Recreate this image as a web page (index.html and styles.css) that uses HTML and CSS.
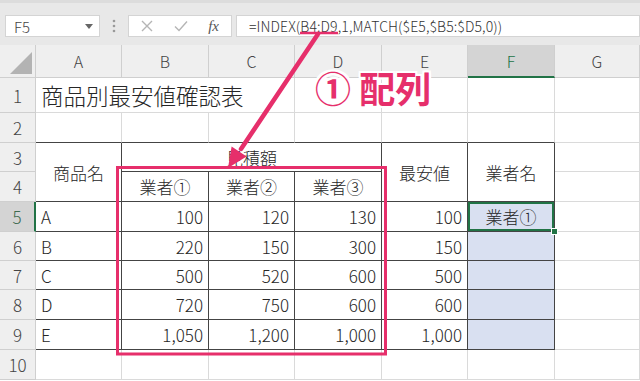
FILE: index.html
```html
<!DOCTYPE html>
<html lang="ja">
<head>
    <meta charset="UTF-8">
    <title>商品別最安値確認表</title>
    <link rel="stylesheet" href="styles.css">
</head>
<body>

    <!-- 数式バー -->
    <div class="bar">
        <div class="namebox">
            <span>F5</span>
            <svg class="caret" width="8" height="5" viewBox="0 0 8 5"><path d="M0 0h8L4 5z" fill="#666"/></svg>
        </div>
        <div class="grip">
            <svg width="4" height="14" viewBox="0 0 4 14"><circle cx="2" cy="2" r="1.3" fill="#999"/><circle cx="2" cy="7" r="1.3" fill="#999"/><circle cx="2" cy="12" r="1.3" fill="#999"/></svg>
        </div>
        <div class="btns">
            <svg width="12" height="12" viewBox="0 0 12 12"><path d="M1 1l10 10M11 1L1 11" stroke="#b5b5b5" stroke-width="1.4" fill="none"/></svg>
            <svg width="14" height="12" viewBox="0 0 14 12"><path d="M1 6.5l4 4L13 1.5" stroke="#b5b5b5" stroke-width="1.4" fill="none"/></svg>
            <span class="fx">fx</span>
        </div>
        <div class="formula">=INDEX(B4:D9,1,MATCH($E5,$B5:$D5,0))</div>
    </div>

    <!-- シート -->
    <table class="sheet">
        <colgroup>
            <col style="width:36px"><col style="width:86px"><col style="width:87px"><col style="width:86px">
            <col style="width:87px"><col style="width:86px"><col style="width:87px"><col style="width:85px">
        </colgroup>
        <tr class="r-head">
            <th class="corner"><span class="tri"></span></th>
            <th>A</th><th>B</th><th>C</th><th>D</th><th>E</th><th class="sel">F</th><th>G</th>
        </tr>
        <tr class="r-1">
            <th class="rn">1</th>
            <td colspan="3" class="title">商品別最安値確認表</td><td></td><td></td><td></td><td></td>
        </tr>
        <tr class="r-n">
            <th class="rn">2</th>
            <td class="top"></td><td class="top"></td><td class="top"></td><td class="top"></td><td class="top"></td><td class="top"></td><td></td>
        </tr>
        <tr class="r-3">
            <th class="rn">3</th>
            <td rowspan="2" class="b c">商品名</td>
            <td colspan="3" class="b c">見積額</td>
            <td rowspan="2" class="b c">最安値</td>
            <td rowspan="2" class="b c">業者名</td>
            <td></td>
        </tr>
        <tr class="r-n">
            <th class="rn">4</th>
            <td class="b c">業者①</td><td class="b c">業者②</td><td class="b c">業者③</td><td></td>
        </tr>
        <tr class="r-n">
            <th class="rn rsel">5</th>
            <td class="b">A</td><td class="b n">100</td><td class="b n">120</td><td class="b n">130</td><td class="b n">100</td>
            <td class="b c fill active">業者①<span class="handle"></span></td><td></td>
        </tr>
        <tr class="r-5">
            <th class="rn">6</th>
            <td class="b">B</td><td class="b n">220</td><td class="b n">150</td><td class="b n">300</td><td class="b n">150</td><td class="b fill"></td><td></td>
        </tr>
        <tr class="r-5">
            <th class="rn">7</th>
            <td class="b">C</td><td class="b n">500</td><td class="b n">520</td><td class="b n">600</td><td class="b n">500</td><td class="b fill"></td><td></td>
        </tr>
        <tr class="r-n">
            <th class="rn">8</th>
            <td class="b">D</td><td class="b n">720</td><td class="b n">750</td><td class="b n">600</td><td class="b n">600</td><td class="b fill"></td><td></td>
        </tr>
        <tr class="r-n">
            <th class="rn">9</th>
            <td class="b">E</td><td class="b n">1,050</td><td class="b n">1,200</td><td class="b n">1,000</td><td class="b n">1,000</td><td class="b fill"></td><td></td>
        </tr>
        <tr class="r-n">
            <th class="rn">10</th>
            <td></td><td></td><td></td><td></td><td></td><td></td><td></td>
        </tr>
    </table>

    <!-- 注釈 -->
    <svg class="marks" width="640" height="381" viewBox="0 0 640 381">
        <g stroke="#e62f6b" fill="none">
            <path d="M300 33H338" stroke-width="2.5"/>
            <path d="M318 34L241 149" stroke-width="4.5" stroke-linecap="round"/>
            <rect x="117.5" y="167.5" width="268" height="186.5" stroke-width="3"/>
        </g>
        <path d="M228 168L246.6 156.4L231.6 146.4Z" fill="#e62f6b"/>
    </svg>
    <div class="callout"><span class="num">①</span> 配列</div>

</body>
</html>
```

FILE: styles.css
```css
/* Estilos generales */
body {
    margin: 0;
    width: 640px;
    height: 381px;
    overflow: hidden;
    position: relative;
    background: #fff;
    font-family: "Noto Sans CJK JP", "Noto Sans", sans-serif;
    font-weight: 300;
    color: #262626;
}

/* Barra de fórmulas */
.bar {
    height: 45px;
    box-sizing: border-box;
    padding: 12px 0 8px 5px;
    background: #e8e8e8;
    border-top: 3px solid #dcdcdc;
    display: flex;
}

.namebox, .btns, .formula {
    background: #fff;
    border: 1px solid #d4d4d4;
    box-sizing: border-box;
    display: flex;
    align-items: center;
}

.namebox {
    width: 95px;
    padding: 0 6px 0 8px;
    justify-content: space-between;
    font-size: 15px;
    color: #444;
}

.grip {
    width: 28px;
    display: flex;
    align-items: center;
    justify-content: center;
}

.btns {
    width: 104px;
    padding: 0 12px 0 12px;
    justify-content: space-between;
}

.fx {
    font-family: "Liberation Serif", serif;
    font-style: italic;
    font-size: 15px;
    color: #555;
}

.formula {
    flex: 1;
    margin-left: 4px;
    padding-left: 12px;
    font-size: 14px;
    letter-spacing: 0.1px;
    color: #333;
}

/* Hoja */
.sheet {
    border-collapse: separate;
    border-spacing: 0;
    table-layout: fixed;
    width: 640px;
}

.sheet th, .sheet td {
    padding: 0;
    border-right: 1px solid #dadada;
    border-bottom: 1px solid #dadada;
    box-sizing: border-box;
    white-space: nowrap;
    overflow: visible;
}

.sheet th {
    background: #efefef;
    font-weight: 300;
    color: #444;
    border-color: #cfcfcf;
}

.r-head th {
    height: 33px;
    font-size: 16px;
}

.corner {
    position: relative;
}

.tri {
    position: absolute;
    right: 3px;
    bottom: 3px;
    width: 0;
    height: 0;
    border-left: 22px solid transparent;
    border-bottom: 22px solid #b3b3b3;
}

.sheet th.sel {
    background: #d4d4d4;
    color: #217346;
    border-bottom: 2px solid #217346;
}

.rn {
    font-size: 17px;
    text-align: center;
}

.sheet th.rsel {
    background: #d4d4d4;
    color: #3d6b4f;
    border-right: 2px solid #217346;
}

.r-1 th, .r-1 td { height: 35px; }
.r-3 th, .r-3 td { height: 29px; }
.r-n th, .r-n td { height: 30px; }
.r-5 th, .r-5 td { height: 29px; }

.sheet td {
    font-size: 17px;
    padding: 0 5px;
}

.sheet td.title {
    font-size: 22.5px;
    padding-left: 5px;
    border-right-color: #dadada;
}

.sheet td.top {
    border-bottom-color: #444;
}

.sheet td.b {
    border-right-color: #444;
    border-bottom-color: #444;
}

.c { text-align: center; }
.n { text-align: right; }

.fill {
    background: #d9e0f1;
}

.active {
    position: relative;
    box-shadow: inset 0 0 0 2px #217346;
}

.handle {
    position: absolute;
    right: -4px;
    bottom: -4px;
    width: 5px;
    height: 5px;
    background: #217346;
    border: 1px solid #fff;
}

/* Anotaciones */
.marks {
    position: absolute;
    left: 0;
    top: 0;
    pointer-events: none;
}

.callout {
    position: absolute;
    left: 315px;
    top: 64px;
    font-size: 36px;
    line-height: 46px;
    font-weight: bold;
    color: #e62f6b;
    white-space: nowrap;
    text-shadow: 2px 0 #fff, -2px 0 #fff, 0 2px #fff, 0 -2px #fff,
                 2px 2px #fff, -2px -2px #fff, 2px -2px #fff, -2px 2px #fff;
}

.callout .num {
    font-weight: bold;
}
```
